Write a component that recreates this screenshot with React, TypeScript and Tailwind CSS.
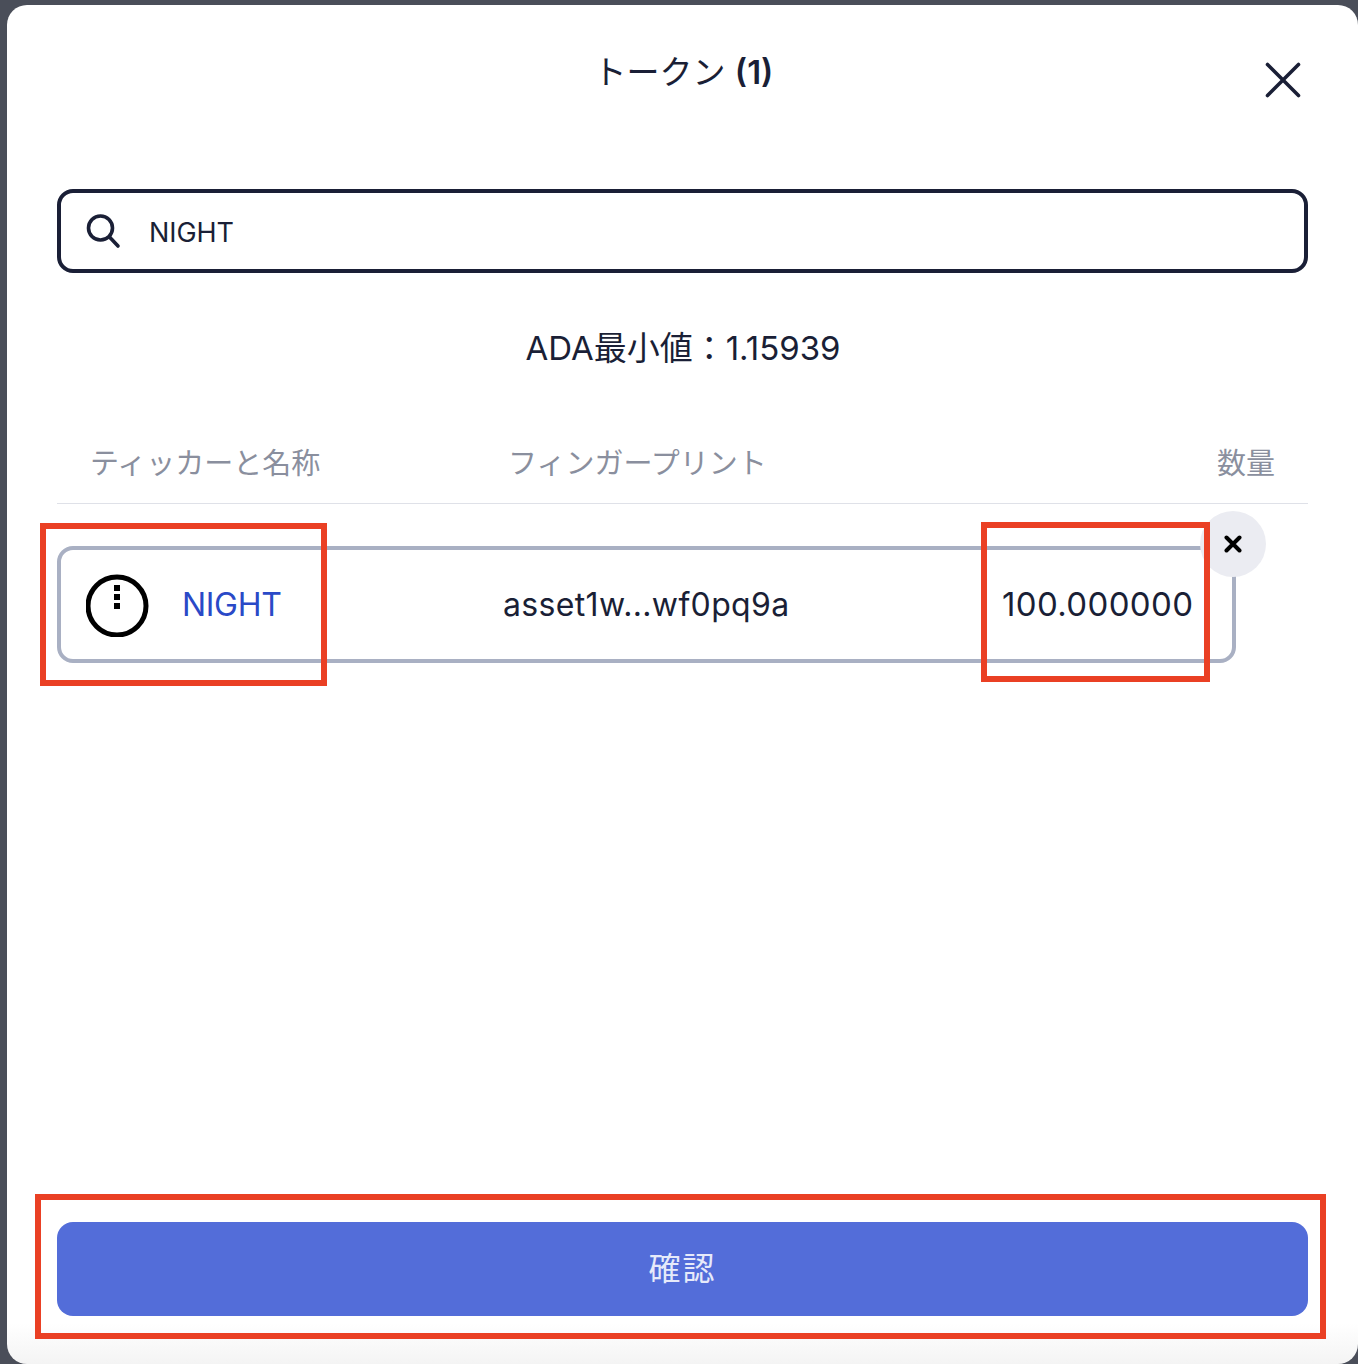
import React from "react";

const fontStack = "font-['Inter','Noto_Sans_CJK_JP',sans-serif]";

const SearchIcon = () => (
  <svg width="36" height="36" viewBox="0 0 36 36" fill="none" stroke="#1a1f36" strokeWidth="3.6" strokeLinecap="round">
    <circle cx="15.5" cy="15" r="12" />
    <path d="M24.5 24 L33 33" />
  </svg>
);

const CloseIcon = () => (
  <svg width="36" height="36" viewBox="0 0 36 36" fill="none" stroke="#1a1f36" strokeWidth="3.6" strokeLinecap="round">
    <path d="M2.5 2.5 L33.5 33.5 M33.5 2.5 L2.5 33.5" />
  </svg>
);

const TokenIcon = () => (
  <svg width="64" height="64" viewBox="0 0 64 64" fill="none">
    <circle cx="31" cy="33" r="29" stroke="#000" strokeWidth="5" />
    <rect x="28" y="12" width="6" height="6" fill="#000" />
    <rect x="28" y="21" width="6" height="6" fill="#000" />
    <rect x="28" y="30" width="6" height="6" fill="#000" />
  </svg>
);

export default function App() {
  return (
    <div className={`relative h-[1364px] w-[1358px] overflow-hidden bg-[#4a4e59] pl-[7px] pt-[5px] ${fontStack}`}>
      <div className="flex h-[1359px] w-[1351px] flex-col rounded-[20px] bg-gradient-to-b from-white from-[97%] to-[#f4f4f4] pl-[50px] pr-[50px] text-[#1a1f36]">
        <div className="relative h-[184px] shrink-0">
          <div className="pl-[2px] pt-[45px] text-center text-[33px] leading-[44px]">
            トークン <span className="font-semibold">(1)</span>
          </div>
          <div className="absolute right-[7px] top-[57px]">
            <CloseIcon />
          </div>
        </div>

        <div className="flex h-[84px] shrink-0 items-center rounded-[16px] border-[4px] border-[#1a1f36] pl-[24px]">
          <SearchIcon />
          <span className="ml-[28px] pt-[4px] text-[27px] tracking-[-0.1px]">NIGHT</span>
        </div>

        <div className="mt-[52px] pl-[1px] text-center text-[33px] leading-[46px]">ADA最小値：1.15939</div>

        <div className="mt-[70px] flex h-[63px] shrink-0 items-start border-b border-[#dfe1e8] px-[33px] text-[29px] leading-[46px] text-[#8a8f9e]">
          <span className="w-[418px]">ティッカーと名称</span>
          <span className="flex-1">フィンガープリント</span>
          <span>数量</span>
        </div>

        <div className="relative mt-[42px] flex h-[117px] w-[1179px] shrink-0 items-center rounded-[16px] border-[4px] border-[#a9b0c3] pl-[25px]">
          <TokenIcon />
          <span className="ml-[32px] w-[321px] pt-[1px] text-[32px] tracking-[-0.3px] text-[#2a49c7]">NIGHT</span>
          <span className="w-[499px] pt-[1px] text-[32px] tracking-[0.35px]">asset1w...wf0pq9a</span>
          <span className="pt-[1px] text-[33px] tracking-[0.35px]">100.000000</span>
          <div className="absolute right-[-34px] top-[-39px] flex h-[66px] w-[66px] items-center justify-center rounded-full bg-[#ebecf2]">
            <svg width="18" height="18" viewBox="0 0 18 18" fill="none" stroke="#000" strokeWidth="4" strokeLinecap="round">
              <path d="M2.5 2.5 L15.5 15.5 M15.5 2.5 L2.5 15.5" />
            </svg>
          </div>
        </div>

        <button className="mt-auto mb-[48px] flex h-[94px] w-full shrink-0 items-center justify-center rounded-[16px] bg-[#536dd9] text-[32px] tracking-[2px] text-[#e6eafa]">
          確認
        </button>
      </div>

      {/* red annotation boxes laid over the screenshot */}
      <div className="absolute left-[40px] top-[523px] h-[163px] w-[287px] border-[6px] border-[#ea4024]" />
      <div className="absolute left-[981px] top-[522px] h-[160px] w-[229px] border-[6px] border-[#ea4024]" />
      <div className="absolute left-[35px] top-[1194px] h-[145px] w-[1291px] border-[6px] border-[#ea4024]" />
    </div>
  );
}
